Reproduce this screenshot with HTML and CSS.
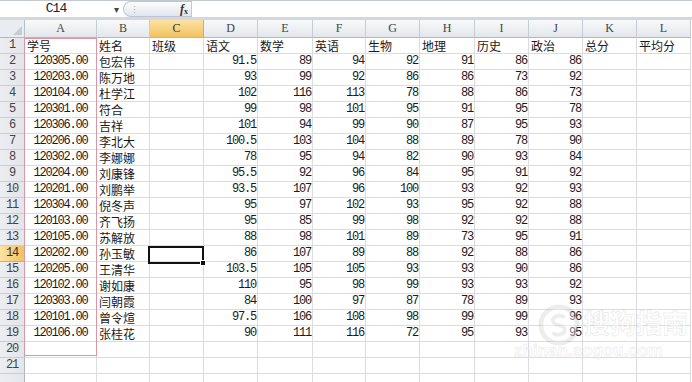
FILE: index.html
```html
<!DOCTYPE html>
<html lang="zh">
<head>
<meta charset="utf-8">
<link rel="stylesheet" href="styles.css">
</head>
<body>
<div class="app">
  <div class="fbar">
    <div class="namebox">C14</div>
    <div class="dd">&#9662;</div>
    <div class="pill"><span class="grip">&#8942;</span><span class="fx"><i>f</i><sub>x</sub></span></div>
    <div class="finput"></div>
  </div>
  <div class="sheet">
    <div class="corner"></div><div class="ch">A</div><div class="ch">B</div><div class="ch sel">C</div><div class="ch">D</div><div class="ch">E</div><div class="ch">F</div><div class="ch">G</div><div class="ch">H</div><div class="ch">I</div><div class="ch">J</div><div class="ch">K</div><div class="ch">L</div>

    <div class="rh">1</div><div class="c">学号</div><div class="c">姓名</div><div class="c">班级</div><div class="c">语文</div><div class="c">数学</div><div class="c">英语</div><div class="c">生物</div><div class="c">地理</div><div class="c">历史</div><div class="c">政治</div><div class="c">总分</div><div class="c">平均分</div>

    <div class="rh">2</div><div class="c id">120305.00</div><div class="c">包宏伟</div><div class="c"></div><div class="c n">91.5</div><div class="c n">89</div><div class="c n">94</div><div class="c n">92</div><div class="c n">91</div><div class="c n">86</div><div class="c n">86</div><div class="c"></div><div class="c"></div>

    <div class="rh">3</div><div class="c id">120203.00</div><div class="c">陈万地</div><div class="c"></div><div class="c n">93</div><div class="c n">99</div><div class="c n">92</div><div class="c n">86</div><div class="c n">86</div><div class="c n">73</div><div class="c n">92</div><div class="c"></div><div class="c"></div>

    <div class="rh">4</div><div class="c id">120104.00</div><div class="c">杜学江</div><div class="c"></div><div class="c n">102</div><div class="c n">116</div><div class="c n">113</div><div class="c n">78</div><div class="c n">88</div><div class="c n">86</div><div class="c n">73</div><div class="c"></div><div class="c"></div>

    <div class="rh">5</div><div class="c id">120301.00</div><div class="c">符合</div><div class="c"></div><div class="c n">99</div><div class="c n">98</div><div class="c n">101</div><div class="c n">95</div><div class="c n">91</div><div class="c n">95</div><div class="c n">78</div><div class="c"></div><div class="c"></div>

    <div class="rh">6</div><div class="c id">120306.00</div><div class="c">吉祥</div><div class="c"></div><div class="c n">101</div><div class="c n">94</div><div class="c n">99</div><div class="c n">90</div><div class="c n">87</div><div class="c n">95</div><div class="c n">93</div><div class="c"></div><div class="c"></div>

    <div class="rh">7</div><div class="c id">120206.00</div><div class="c">李北大</div><div class="c"></div><div class="c n">100.5</div><div class="c n">103</div><div class="c n">104</div><div class="c n">88</div><div class="c n">89</div><div class="c n">78</div><div class="c n">90</div><div class="c"></div><div class="c"></div>

    <div class="rh">8</div><div class="c id">120302.00</div><div class="c">李娜娜</div><div class="c"></div><div class="c n">78</div><div class="c n">95</div><div class="c n">94</div><div class="c n">82</div><div class="c n">90</div><div class="c n">93</div><div class="c n">84</div><div class="c"></div><div class="c"></div>

    <div class="rh">9</div><div class="c id">120204.00</div><div class="c">刘康锋</div><div class="c"></div><div class="c n">95.5</div><div class="c n">92</div><div class="c n">96</div><div class="c n">84</div><div class="c n">95</div><div class="c n">91</div><div class="c n">92</div><div class="c"></div><div class="c"></div>

    <div class="rh">10</div><div class="c id">120201.00</div><div class="c">刘鹏举</div><div class="c"></div><div class="c n">93.5</div><div class="c n">107</div><div class="c n">96</div><div class="c n">100</div><div class="c n">93</div><div class="c n">92</div><div class="c n">93</div><div class="c"></div><div class="c"></div>

    <div class="rh">11</div><div class="c id">120304.00</div><div class="c">倪冬声</div><div class="c"></div><div class="c n">95</div><div class="c n">97</div><div class="c n">102</div><div class="c n">93</div><div class="c n">95</div><div class="c n">92</div><div class="c n">88</div><div class="c"></div><div class="c"></div>

    <div class="rh">12</div><div class="c id">120103.00</div><div class="c">齐飞扬</div><div class="c"></div><div class="c n">95</div><div class="c n">85</div><div class="c n">99</div><div class="c n">98</div><div class="c n">92</div><div class="c n">92</div><div class="c n">88</div><div class="c"></div><div class="c"></div>

    <div class="rh">13</div><div class="c id">120105.00</div><div class="c">苏解放</div><div class="c"></div><div class="c n">88</div><div class="c n">98</div><div class="c n">101</div><div class="c n">89</div><div class="c n">73</div><div class="c n">95</div><div class="c n">91</div><div class="c"></div><div class="c"></div>

    <div class="rh sel">14</div><div class="c id">120202.00</div><div class="c">孙玉敏</div><div class="c"></div><div class="c n">86</div><div class="c n">107</div><div class="c n">89</div><div class="c n">88</div><div class="c n">92</div><div class="c n">88</div><div class="c n">86</div><div class="c"></div><div class="c"></div>

    <div class="rh">15</div><div class="c id">120205.00</div><div class="c">王清华</div><div class="c"></div><div class="c n">103.5</div><div class="c n">105</div><div class="c n">105</div><div class="c n">93</div><div class="c n">93</div><div class="c n">90</div><div class="c n">86</div><div class="c"></div><div class="c"></div>

    <div class="rh">16</div><div class="c id">120102.00</div><div class="c">谢如康</div><div class="c"></div><div class="c n">110</div><div class="c n">95</div><div class="c n">98</div><div class="c n">99</div><div class="c n">93</div><div class="c n">93</div><div class="c n">92</div><div class="c"></div><div class="c"></div>

    <div class="rh">17</div><div class="c id">120303.00</div><div class="c">闫朝霞</div><div class="c"></div><div class="c n">84</div><div class="c n">100</div><div class="c n">97</div><div class="c n">87</div><div class="c n">78</div><div class="c n">89</div><div class="c n">93</div><div class="c"></div><div class="c"></div>

    <div class="rh">18</div><div class="c id">120101.00</div><div class="c">曾令煊</div><div class="c"></div><div class="c n">97.5</div><div class="c n">106</div><div class="c n">108</div><div class="c n">98</div><div class="c n">99</div><div class="c n">99</div><div class="c n">96</div><div class="c"></div><div class="c"></div>

    <div class="rh">19</div><div class="c id">120106.00</div><div class="c">张桂花</div><div class="c"></div><div class="c n">90</div><div class="c n">111</div><div class="c n">116</div><div class="c n">72</div><div class="c n">95</div><div class="c n">93</div><div class="c n">95</div><div class="c"></div><div class="c"></div>

    <div class="rh">20</div><div class="c"></div><div class="c"></div><div class="c"></div><div class="c"></div><div class="c"></div><div class="c"></div><div class="c"></div><div class="c"></div><div class="c"></div><div class="c"></div><div class="c"></div><div class="c"></div>

    <div class="rh">21</div><div class="c"></div><div class="c"></div><div class="c"></div><div class="c"></div><div class="c"></div><div class="c"></div><div class="c"></div><div class="c"></div><div class="c"></div><div class="c"></div><div class="c"></div><div class="c"></div>

    <div class="rh"></div><div class="c"></div><div class="c"></div><div class="c"></div><div class="c"></div><div class="c"></div><div class="c"></div><div class="c"></div><div class="c"></div><div class="c"></div><div class="c"></div><div class="c"></div><div class="c"></div>
  </div>

  <div class="shape-rect"></div>
  <div class="selbox"><span class="handle"></span></div>

  <svg class="wm-logo" width="42" height="42" viewBox="0 0 44 44">
    <circle cx="22" cy="22" r="19" fill="rgba(255,255,255,0.4)" stroke="rgba(140,140,140,0.16)" stroke-width="5"/>
    <path d="M28 14 C22 10 14 13 16 19 C18 24 28 21 28 27 C28 32 20 34 15 30" fill="none" stroke="rgba(140,140,140,0.16)" stroke-width="4"/>
  </svg>
  <div class="wm-cn">搜狗指南</div>
  <div class="wm-en">zhinan.sogou.com</div>
</div>
</body>
</html>
```

FILE: styles.css
```css
* { box-sizing: border-box; }
html, body { margin: 0; padding: 0; background: #fff; }
body { width: 692px; height: 382px; overflow: hidden; font-family: "Noto Sans CJK SC", sans-serif; }

.app { position: relative; width: 692px; height: 382px; overflow: hidden; }

.fbar {
  display: flex;
  align-items: stretch;
  height: 20px;
  border-top: 1px solid #c4c9d0;
  border-bottom: 3px solid #d3d8df;
  background: #fff;
}
.namebox {
  width: 112px;
  font-family: "Liberation Mono", monospace;
  font-size: 13px;
  letter-spacing: -1px;
  line-height: 16px;
  text-align: center;
  color: #222;
}
.dd {
  width: 9px;
  font-size: 10px;
  line-height: 16px;
  color: #444;
  text-align: center;
}
.pill {
  margin-left: 2px;
  width: 68px;
  display: flex;
  align-items: center;
  justify-content: space-between;
  padding: 0 3px 0 6px;
  background: linear-gradient(#fbfcfd, #e2e6eb);
  border: 1px solid #bfc6cf;
  border-right: none;
  border-radius: 9px 0 0 9px;
}
.grip { font-size: 9px; color: #a0a7b0; line-height: 1; }
.fx {
  font-family: "Liberation Serif", serif;
  font-weight: bold;
  font-size: 12px;
  color: #333;
  line-height: 1;
}
.fx sub { font-size: 8px; vertical-align: -1px; }
.finput {
  flex: 1;
  border-left: 1px solid #c4c9d0;
  background: #fff;
}

.sheet {
  display: grid;
  grid-template-columns: 25px 72px 53px 54px 54px 55px 53px 54px 55px 54px 54px 54px 54px;
  grid-template-rows: 18px;
  grid-auto-rows: 16px;
}
.corner {
  position: relative;
  background: #e9ecf0;
  border-right: 1px solid #b8c0ca;
  border-bottom: 1px solid #aeb7c2;
}
.corner::after {
  content: "";
  position: absolute;
  right: 2px;
  bottom: 2px;
  border-left: 9px solid transparent;
  border-bottom: 9px solid #c7ccd3;
}
.ch {
  background: linear-gradient(#f8f9fa, #e3e7ec);
  border-right: 1px solid #c6ccd4;
  border-bottom: 1px solid #aeb7c2;
  font-family: "Liberation Serif", serif;
  font-size: 12px;
  line-height: 17px;
  color: #444;
  text-align: center;
}
.ch.sel {
  background: linear-gradient(#fbe2a4, #f2c35f);
  border-right-color: #d8ac5a;
  color: #333;
}
.rh {
  background: linear-gradient(90deg, #eceef1, #e2e5ea);
  border-right: 1px solid #aeb7c2;
  border-bottom: 1px solid #c9ced6;
  font-family: "Liberation Mono", monospace;
  font-size: 12px;
  letter-spacing: -1.2px;
  line-height: 15px;
  color: #444;
  text-align: center;
}
.rh.sel {
  background: linear-gradient(90deg, #fbe2a4, #f2c35f);
  border-bottom-color: #d8ac5a;
  color: #333;
}
.c {
  border-right: 1px solid #dadcdf;
  border-bottom: 1px solid #dadcdf;
  font-size: 12px;
  line-height: 15px;
  color: #1a1a1a;
  white-space: nowrap;
  overflow: hidden;
  padding: 0 2px;
}
.c.n, .c.id {
  font-family: "Liberation Mono", monospace;
  font-size: 12px;
  letter-spacing: -1.2px;
}
.c.n { text-align: right; padding-right: 1px; }
.c.id { text-align: center; }

.shape-rect {
  position: absolute;
  left: 24px;
  top: 38px;
  width: 73px;
  height: 318px;
  border: 1px solid #dc95a2;
  pointer-events: none;
}
.selbox {
  position: absolute;
  left: 148px;
  top: 246px;
  width: 56px;
  height: 18px;
  border: 2px solid #111;
}
.handle {
  position: absolute;
  right: -4px;
  bottom: -4px;
  width: 6px;
  height: 6px;
  background: #111;
  border: 1px solid #fff;
}

.wm-logo {
  position: absolute;
  left: 538px;
  top: 304px;
  pointer-events: none;
}
.wm-cn {
  position: absolute;
  left: 584px;
  top: 304px;
  white-space: nowrap;
  font-size: 26px;
  line-height: 36px;
  font-weight: bold;
  color: rgba(255, 255, 255, 0.55);
  -webkit-text-stroke: 1px rgba(140, 140, 140, 0.16);
  pointer-events: none;
}
.wm-en {
  position: absolute;
  left: 514px;
  top: 342px;
  white-space: nowrap;
  font-family: "Liberation Sans", sans-serif;
  font-size: 17px;
  line-height: 18px;
  font-weight: bold;
  color: rgba(255, 255, 255, 0.55);
  -webkit-text-stroke: 1px rgba(140, 140, 140, 0.14);
  pointer-events: none;
}
```
